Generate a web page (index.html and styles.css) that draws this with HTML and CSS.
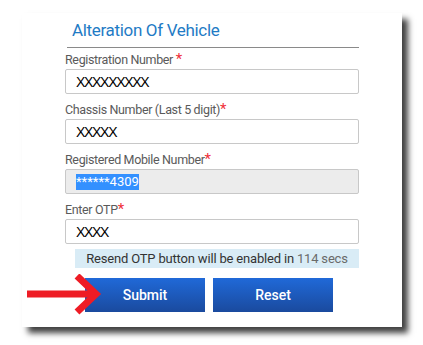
FILE: index.html
```html
<!DOCTYPE html>
<html>
<head>
<meta charset="utf-8">
<link rel="stylesheet" href="styles.css">
</head>
<body>
<div class="page">
<div class="card">
  <h1 class="title">Alteration Of Vehicle</h1>
  <div class="field">
    <label class="lbl">Registration Number <span class="req">*</span></label>
    <div class="input">XXXXXXXXX</div>
  </div>
  <div class="field">
    <label class="lbl">Chassis Number (Last 5 digit)<span class="req">*</span></label>
    <div class="input">XXXXX</div>
  </div>
  <div class="field">
    <label class="lbl">Registered Mobile Number<span class="req">*</span></label>
    <div class="input disabled"><span class="sel">******4309</span></div>
  </div>
  <div class="field">
    <label class="lbl">Enter OTP<span class="req">*</span></label>
    <div class="input">XXXX</div>
  </div>
  <div class="notice">Resend OTP button will be enabled in <span class="secs">114 secs</span></div>
  <div class="actions">
    <button class="btn">Submit</button>
    <button class="btn">Reset</button>
    <svg class="arrow" width="80" height="42" viewBox="0 0 80 42">
      <line x1="0" y1="20" x2="66" y2="20" stroke="#ee1c25" stroke-width="7"/>
      <polyline points="50,2 69,20 50,38" fill="none" stroke="#ee1c25" stroke-width="7"/>
    </svg>
  </div>
</div>
</div>
</body>
</html>
```

FILE: styles.css
```css
html, body { margin: 0; padding: 0; background: #fff; }
body { font-family: Roboto, "Liberation Sans", sans-serif; }
.page {
  display: flex;
  align-items: flex-start;
  padding: 13px 21px 18px 22px;
}
.card {
  position: relative;
  width: 380px;
  box-sizing: border-box;
  background: #fff;
  box-shadow: 6px 6px 6px rgba(0,0,0,0.75);
  padding: 6px 43px 15px 43px;
}
.title {
  margin: 0 0 0 2px;
  padding: 0 0 6px 5px;
  font-size: 17px;
  font-weight: 400;
  letter-spacing: -0.33px;
  color: #1f7bc5;
  border-bottom: 1px solid #8a8a8a;
  line-height: 22px;
}
.field { display: flex; flex-direction: column; }
.lbl {
  font-size: 12.5px;
  letter-spacing: -0.35px;
  color: #5a5a5a;
  line-height: 15px;
  margin-top: 4px;
  height: 17px;
}
.req { color: #f0303a; font-size: 15px; letter-spacing: 0; }
.input {
  height: 25px;
  box-sizing: border-box;
  border: 1px solid #c8c8c8;
  border-radius: 2px;
  padding: 0 10px;
  display: flex;
  align-items: center;
  font-family: Arial, "Liberation Sans", sans-serif;
  font-size: 14px;
  letter-spacing: -1.3px;
  color: #000;
}
.field:nth-child(3), .field:nth-child(4), .field:nth-child(5) { margin-top: 4px; }
.disabled { background: #ececec; }
.sel {
  background: #3390ff;
  color: #fff;
  font-family: Roboto, sans-serif;
  font-size: 13px;
  letter-spacing: 0;
  line-height: 15px;
  padding: 0 0 1px 0;
}
.notice {
  margin: 5px 0 0 10px;
  height: 19px;
  background: #d9ecf6;
  font-size: 13px;
  letter-spacing: -0.18px;
  color: #333;
  text-align: center;
  line-height: 19px;
}
.secs { color: #6a6a6a; }
.actions {
  position: relative;
  display: flex;
  gap: 8px;
  margin: 10px 0 0 20px;
}
.btn {
  width: 120px;
  height: 34px;
  border: none;
  padding: 0;
  background: linear-gradient(#2069d8, #1a4a9e);
  color: #fff;
  font-family: Roboto, sans-serif;
  font-weight: 500;
  font-size: 14px;
}
.arrow { position: absolute; left: -58px; top: -4px; }
```
